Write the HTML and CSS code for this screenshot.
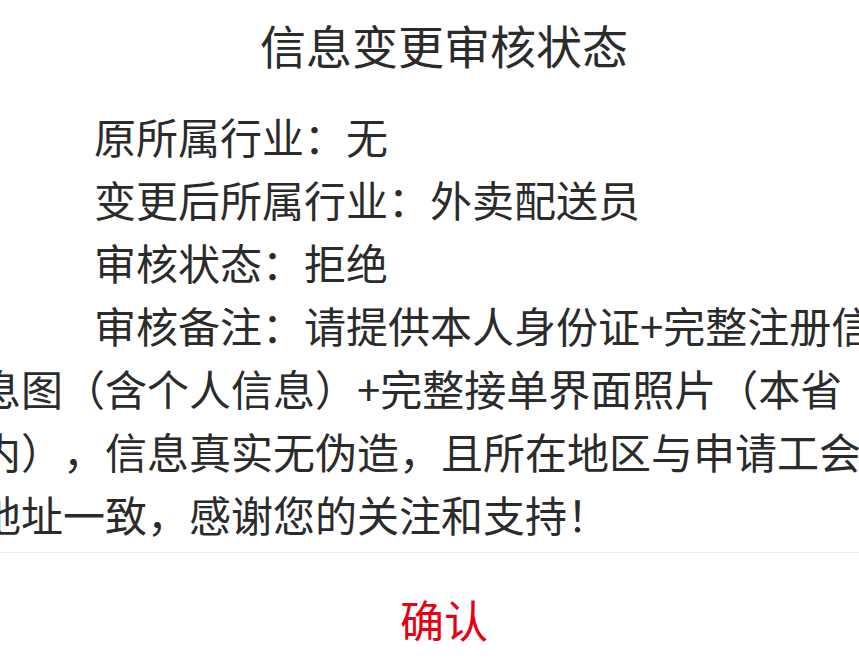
FILE: index.html
```html
<!DOCTYPE html>
<html lang="zh-CN">
<head>
<meta charset="utf-8">
<title>信息变更审核状态</title>
<link rel="stylesheet" href="styles.css">
</head>
<body>
<div class="dialog">
  <h1 class="title">信息变更审核状态</h1>
  <div class="content">
    <p class="row">原所属行业：无</p>
    <p class="row">变更后所属行业：外卖配送员</p>
    <p class="row">审核状态：拒绝</p>
    <p class="row">审核备注：请提供本人身份证+完整注册信息图（含个人信息）+完整接单界面照片（本省内），信息真实无伪造，且所在地区与申请工会地址一致，感谢您的关注和支持！</p>
  </div>
  <div class="footer">
    <button class="confirm" type="button">确认</button>
  </div>
</div>
</body>
</html>
```

FILE: styles.css
```css
html, body {
  margin: 0;
  padding: 0;
  background: #ffffff;
  overflow: hidden;
}

body {
  width: 859px;
  height: 658px;
  font-family: "Noto Sans CJK SC", "Noto Sans", sans-serif;
  color: #2b2b2b;
  text-spacing-trim: space-all;
}

.dialog {
  width: 930px;
  margin-left: -21px;
}

.title {
  margin: 0;
  padding-top: 12px;
  font-size: 46px;
  font-weight: 400;
  line-height: 64px;
  text-align: center;
  color: #2b2b2b;
}

.content {
  margin-top: 28px;
  padding-right: 20px;
  font-size: 42px;
  line-height: 63px;
  border-bottom: 1px solid #ececec;
  padding-bottom: 7px;
}

.row {
  margin: 0;
  text-indent: 115px;
  word-break: break-all;
}

.footer {
  display: flex;
  justify-content: center;
  padding-top: 35px;
}

.confirm {
  border: none;
  background: transparent;
  padding: 0;
  font-family: "Noto Sans CJK SC", "Noto Sans", sans-serif;
  font-size: 44px;
  line-height: 63px;
  color: #e60012;
}
```
